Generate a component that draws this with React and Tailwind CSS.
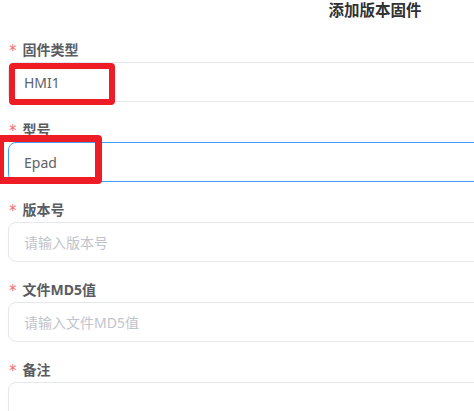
const font = { fontFamily: '"Noto Sans", "Noto Sans CJK SC", sans-serif' };

function Field({ label, value, placeholder, focused, tall }) {
  return (
    <div className="flex flex-col">
      <div className="flex items-center h-[20px] pl-[9px] text-[14px] font-bold text-[#5a5c61] leading-[20px]">
        <span className="text-[#f56c6c] mr-[6px] font-normal text-[15px] font-['DejaVu_Sans'] mt-[2px]">*</span>
        {label}
      </div>
      <div
        className={
          'ml-[8px] mt-[2px] w-[700px] rounded-[8px] border px-[15px] flex items-center text-[14px] ' +
          (tall ? 'h-[80px] items-start pt-[8px] ' : 'h-[40px] ') +
          (focused ? 'border-[#409eff]' : 'border-[#e4e7ed]')
        }
      >
        {value ? (
          <span className="text-[#606266]">{value}</span>
        ) : (
          <span className="text-[#c0c4cc]">{placeholder}</span>
        )}
      </div>
    </div>
  );
}

export default function App() {
  return (
    <div className="relative w-[474px] h-[411px] overflow-hidden bg-white" style={font}>
      <div className="w-[750px]">
        <div className="h-[22px] text-center text-[15.5px] font-bold text-[#303133] leading-[20px]">
          添加版本固件
        </div>
        <div className="flex flex-col gap-[18px] pt-[18px]">
          <Field label="固件类型" value="HMI1" />
          <Field label="型号" value="Epad" focused />
          <Field label="版本号" placeholder="请输入版本号" />
          <Field label="文件MD5值" placeholder="请输入文件MD5值" />
          <Field label="备注" tall />
        </div>
      </div>

      {/* annotation boxes */}
      <div className="absolute left-[9px] top-[63px] w-[106px] h-[42px] border-[6px] border-[#ee1c25] rounded-[4px]" />
      <div className="absolute left-[-3px] top-[135px] w-[105px] h-[49px] border-[7px] border-[#ee1c25] rounded-[4px]" />
    </div>
  );
}
